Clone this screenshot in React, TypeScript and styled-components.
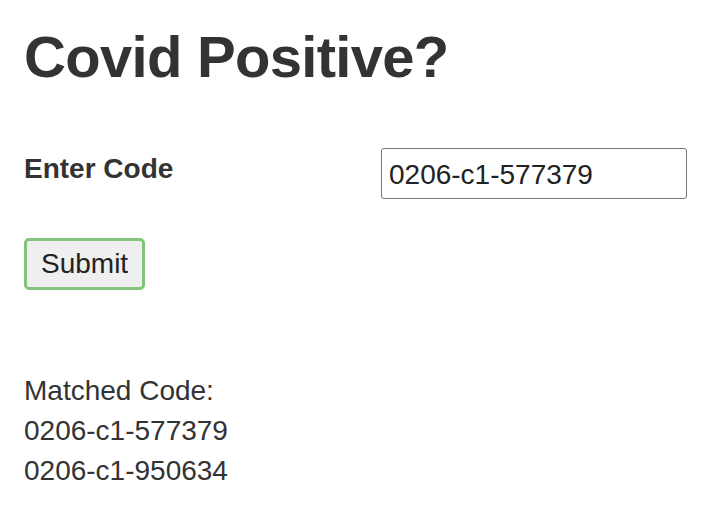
import React from "react";
import styled, { createGlobalStyle } from "styled-components";

const GlobalStyle = createGlobalStyle`
  html, body {
    margin: 0;
    padding: 0;
    background: #ffffff;
  }
  body {
    font-family: "Liberation Sans", Arial, Helvetica, sans-serif;
    color: #333333;
  }
`;

const Page = styled.main`
  padding: 25px 24px 0 24px;
  display: flex;
  flex-direction: column;
  align-items: flex-start;
`;

const Title = styled.h1`
  margin: 0;
  font-size: 58px;
  line-height: 1.1;
  font-weight: 700;
  letter-spacing: -0.7px;
  color: #333333;
`;

const FormRow = styled.div`
  margin-top: 57px;
  display: grid;
  grid-template-columns: 357px 306px;
  align-items: start;
`;

const Label = styled.label`
  margin-top: 3px;
  font-size: 28px;
  line-height: 40px;
  font-weight: 700;
  color: #333333;
`;

const CodeInput = styled.input`
  box-sizing: border-box;
  margin-top: 2px;
  width: 306px;
  height: 51px;
  padding: 3px 7px 0 7px;
  border: 1px solid #767676;
  border-radius: 3px;
  font-family: "Liberation Sans", Arial, sans-serif;
  font-size: 28px;
  color: #222222;
  background: #ffffff;
  outline: none;
`;

const SubmitButton = styled.button`
  box-sizing: border-box;
  margin-top: 39px;
  height: 52px;
  padding: 1px 14px 0 14px;
  border: 3px solid #84c47c;
  border-radius: 5px;
  background: #efefef;
  font-family: "Liberation Sans", Arial, sans-serif;
  font-size: 28px;
  color: #222222;
  cursor: pointer;
`;

const Results = styled.div`
  margin-top: 81px;
  font-size: 28px;
  line-height: 40px;
  color: #333333;
`;

const Line = styled.div``;

export default function App() {
  const matches = ["0206-c1-577379", "0206-c1-950634"];
  return (
    <>
      <GlobalStyle />
      <Page>
        <Title>Covid Positive?</Title>
        <FormRow>
          <Label htmlFor="code">Enter Code</Label>
          <CodeInput id="code" type="text" defaultValue="0206-c1-577379" />
        </FormRow>
        <SubmitButton type="button">Submit</SubmitButton>
        <Results>
          <Line>Matched Code:</Line>
          {matches.map((m) => (
            <Line key={m}>{m}</Line>
          ))}
        </Results>
      </Page>
    </>
  );
}
